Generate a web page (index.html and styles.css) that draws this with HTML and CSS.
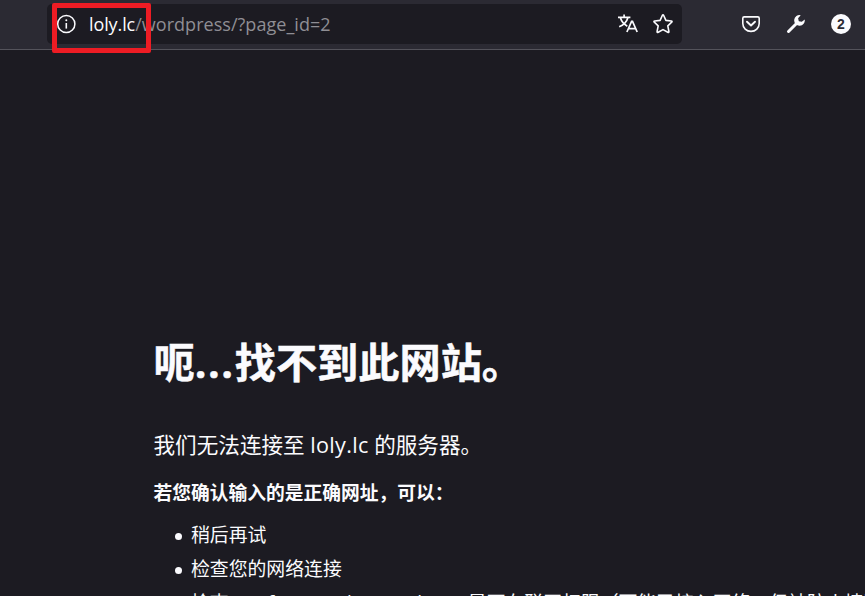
FILE: index.html
```html
<!DOCTYPE html>
<html lang="zh-CN">
<head>
<meta charset="utf-8">
<title>找不到服务器</title>
<link rel="stylesheet" href="styles.css">
</head>
<body>
<header class="toolbar">
  <div class="urlbar">
    <svg class="info" width="20" height="20" viewBox="0 0 20 20" fill="none" stroke="#fbfbfe"><circle cx="10.300" cy="10" r="8.6" stroke-width="1.5"/><path d="M10.300 9v5.6" stroke-width="1.6"/><circle cx="10.300" cy="6.3" r="1" fill="#fbfbfe" stroke="none"/></svg>
    <span class="url"><span class="host">loly.lc</span><span class="path">/wordpress/?page_id=2</span></span>
    <svg class="translate" width="22" height="22" viewBox="0 0 22 22" fill="none" stroke="#fbfbfe" stroke-width="1.7"><path d="M1 4.4h12.4M7.1 1.6v2.8M3.3 4.6c1.2 4 3.7 6.8 7 8.6M11 4.6c-1.2 4-4.4 7.6-8.8 9.2"/><path d="M9.900 19l4.700-10.600h.9L20.200 19M11.400 15.600h7.300"/></svg>
    <svg class="star" width="22" height="22" viewBox="0 0 22 22" fill="none" stroke="#fbfbfe" stroke-width="1.6" stroke-linejoin="round"><path d="M10.300 2.500Q11 1.200 11.700 2.500L13.900 7.400L19.300 8Q20.600 8.300 19.700 9.200L15.800 12.900L16.900 18.500Q17 19.800 15.800 19.300L11 16.600L6.200 19.300Q5 19.800 5.100 18.500L6.200 12.900L2.300 9.200Q1.400 8.300 2.700 8L8.100 7.400Z"/></svg>
  </div>
  <div class="actions">
    <svg width="20" height="20" viewBox="0 0 20 20" fill="none" stroke="#fbfbfe" stroke-width="1.6" stroke-linecap="round" stroke-linejoin="round"><path d="M3.200 2.900h13.600q1.400 0 1.400 1.400v5.200a8.200 7.900 0 0 1-16.400 0V4.300q0-1.400 1.400-1.400z"/><path d="M6 7.700l4 3.800 4-3.800" stroke-width="1.900"/></svg>
    <svg width="20" height="20" viewBox="0 0 20 20"><path d="M2.500 17.500L11.500 8.500" stroke="#fbfbfe" stroke-width="3" stroke-linecap="round"/><path d="M14.700 1.200a5.300 5.300 0 1 0 4 4.200l-2.900 2.400-3-.6-.7-3z" fill="#fbfbfe"/></svg>
    <span class="badge">2</span>
  </div>
</header>
<div class="marker"></div>
<main class="error">
  <h1>呃<span class="dots">...</span>找不到此网站。</h1>
  <p class="lead">我们无法连接至 <span class="name">loly.lc</span> 的服务器。</p>
  <p class="hint">若您确认输入的是正确网址，可以：</p>
  <ul>
    <li>稍后再试</li>
    <li>检查您的网络连接</li>
    <li>检查 <span class="product">Firefox Developer Edition</span> 是否有联网权限（可能已接入网络，但被防火墙阻止）</li>
  </ul>
</main>
</body>
</html>
```
FILE: styles.css
```css
* { box-sizing: border-box; }
html, body { height: 100%; overflow: hidden; }
body {
  margin: 0;
  background: #1c1b22;
  color: #fbfbfe;
  font-family: "Open Sans", "Noto Sans CJK SC", sans-serif;
}
.toolbar {
  display: flex;
  align-items: flex-start;
  height: 50px;
  padding: 4px 0 0 47px;
  background: #2b2a33;
  border-bottom: 1px solid #54535b;
}
.urlbar {
  display: flex;
  align-items: center;
  width: 635px;
  height: 40px;
  padding: 0 8px 0 9px;
  border-radius: 5px;
  background: #1c1b22;
}
.url {
  flex: 1;
  margin-left: 13px;
  font-size: 18px;
  line-height: 40px;
  white-space: nowrap;
}
.host { letter-spacing: -0.1px; }
.path { color: #8f8e94; letter-spacing: 0.04px; }
.translate { margin-right: 13px; }
.actions {
  display: flex;
  align-items: center;
  gap: 25px;
  height: 40px;
  margin-left: 59px;
}
.badge {
  width: 20px;
  height: 20px;
  border-radius: 50%;
  background: #fbfbfe;
  color: #2b2a33;
  font: bold 14px/20px "Liberation Sans", sans-serif;
  text-align: center;
}
.marker {
  position: absolute;
  left: 52px;
  top: 3px;
  width: 99px;
  height: 50px;
  border: 5px solid #ed1c24;
  border-radius: 2px;
}
.error {
  height: 546px;
  padding: 282px 0 0 153.5px;
  overflow: hidden;
  white-space: nowrap;
}
h1 {
  margin: 0;
  font-size: 41.2px;
  line-height: 60px;
  font-weight: 700;
  -webkit-text-stroke: 0.5px #fbfbfe;
}
.dots { display: inline-block; width: 40px; letter-spacing: 1.5px; }
.lead { margin: 37px 0 0; font-size: 21.6px; line-height: 32px; }
.name { letter-spacing: 0.3px; }
.hint { margin: 17.5px 0 0; font-size: 18.75px; line-height: 28px; font-weight: 700; }
ul {
  margin: 11.5px 0 0;
  padding-left: 37.5px;
  list-style: none;
  font-size: 18.85px;
  line-height: 34px;
}
li { display: flex; align-items: center; white-space: pre; }
li::before {
  content: "";
  flex: none;
  width: 7px;
  height: 7px;
  margin: 2px 9.5px 0 -16.5px;
  border-radius: 50%;
  background: #fbfbfe;
}
.product { margin-top: -2px; letter-spacing: 0.32px; }
```
